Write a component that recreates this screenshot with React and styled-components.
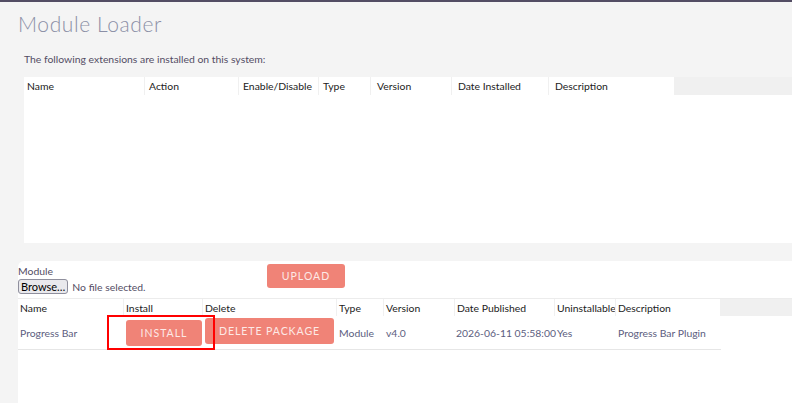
import React from "react";
import styled, { createGlobalStyle } from "styled-components";

const Global = createGlobalStyle`
  html, body { margin: 0; padding: 0; background: #f4f4f4; }
  body { font-family: Lato, "Open Sans", sans-serif; font-size: 10.4px; color: #534d64; }
  * { box-sizing: border-box; }
`;

const TopBar = styled.div`
  height: 2px;
  background: #534d64;
`;

const Page = styled.div`
  padding: 0 0 0 18px;
  overflow: hidden;
  height: 401px;
`;

const Title = styled.h1`
  margin: 9px 0 0 0;
  font-family: Lato, sans-serif;
  font-weight: 300;
  font-size: 21px;
  line-height: 26px;
  letter-spacing: 0.6px;
  color: #8b8fa6;
`;

const Intro = styled.p`
  margin: 15px 0 0 6px;
  font-size: 10.4px;
  line-height: 14px;
  color: #534d64;
`;

const Installed = styled.div`
  margin: 11px 0 0 6px;
  background: #fff;
  height: 166px;
`;

const HeadRow = styled.div`
  display: flex;
  height: 18px;
  background: #f0f0f0;
  border-top: ${(p) => (p.$top ? "1px solid #ececec" : "none")};
`;

const HeadCell = styled.div`
  width: ${(p) => p.$w}px;
  flex: none;
  background: #fff;
  padding-left: ${(p) => p.$pad ?? 3}px;
  border-left: ${(p) => (p.$first ? "none" : "1px solid #f0f0f0")};
  font-size: 10.4px;
  line-height: 18px;
  color: #222;
  white-space: nowrap;
  overflow: hidden;
`;

const Panel = styled.div`
  margin-top: 18px;
  background: #fff;
  border-top-left-radius: 6px;
  height: 150px;
`;

const UploadBar = styled.div`
  display: flex;
  align-items: flex-start;
  height: 37px;
`;

const FileField = styled.div`
  display: flex;
  flex-direction: column;
  padding-top: 4px;
  width: 249px;
`;

const Label = styled.label`
  font-size: 10.4px;
  line-height: 12px;
  color: #534d64;
`;

const FileRow = styled.div`
  display: flex;
  align-items: center;
  gap: 4px;
  margin-top: 2px;
`;

const BrowseButton = styled.span`
  display: inline-block;
  height: 15px;
  padding: 0 2px;
  background: #e9e9ed;
  border: 1px solid #8f8f9d;
  border-radius: 3px;
  font-size: 11px;
  line-height: 13px;
  color: #000;
`;

const FileName = styled.span`
  font-size: 10.4px;
  color: #534d64;
`;

const ActionButton = styled.button`
  display: inline-flex;
  align-items: center;
  justify-content: center;
  width: ${(p) => p.$w}px;
  height: ${(p) => p.$h}px;
  margin-top: ${(p) => p.$mt || 0}px;
  padding: 0;
  border: none;
  border-radius: 3px;
  background: #f08377;
  color: #fde9e6;
  font-family: Lato, sans-serif;
  font-size: ${(p) => p.$fs || 10.5}px;
  letter-spacing: ${(p) => p.$ls || 0.9}px;
  text-transform: uppercase;
`;

const BodyRow = styled.div`
  position: relative;
  display: flex;
  height: 34px;
  width: 703px;
  border-bottom: 1px solid #e6e6e6;
`;

const Cell = styled.div`
  width: ${(p) => p.$w}px;
  flex: none;
  display: flex;
  align-items: ${(p) => (p.$top ? "flex-start" : "center")};
  padding-left: ${(p) => p.$pad ?? 2}px;
  padding-top: ${(p) => p.$pt || 0}px;
  font-size: 10.4px;
  color: #5b5d7e;
  white-space: nowrap;
`;

const Highlight = styled.div`
  position: absolute;
  left: 89px;
  top: -1px;
  width: 108px;
  height: 35px;
  border: 2px solid #f00;
  pointer-events: none;
`;

const installedCols = [
  ["Name", 120, 3],
  ["Action", 94, 4],
  ["Enable/Disable", 80, 4],
  ["Type", 52, 4],
  ["Version", 81, 6],
  ["Date Installed", 97, 6],
  ["Description", 126, 6],
];

const pkgCols = [
  ["Name", 105],
  ["Install", 79],
  ["Delete", 134],
  ["Type", 47],
  ["Version", 71],
  ["Date Published", 100],
  ["Uninstallable", 61],
  ["Description", 105],
];

export default function App() {
  return (
    <>
      <Global />
      <TopBar />
      <Page>
        <Title>Module Loader</Title>
        <Intro>The following extensions are installed on this system:</Intro>
        <Installed>
          <HeadRow>
            {installedCols.map(([t, w, pad], i) => (
              <HeadCell key={t} $w={w} $pad={pad} $first={i === 0}>
                {t}
              </HeadCell>
            ))}
          </HeadRow>
        </Installed>
        <Panel>
          <UploadBar>
            <FileField>
              <Label>Module</Label>
              <FileRow>
                <BrowseButton>Browse…</BrowseButton>
                <FileName>No file selected.</FileName>
              </FileRow>
            </FileField>
            <ActionButton $w={78} $h={24} $mt={3} $ls={1}>
              Upload
            </ActionButton>
          </UploadBar>
          <HeadRow $top>
            {pkgCols.map(([t, w], i) => (
              <HeadCell key={t} $w={w} $first={i === 0} $pad={2}>
                {t}
              </HeadCell>
            ))}
          </HeadRow>
          <BodyRow>
            <Cell $w={105}>Progress Bar</Cell>
            <Cell $w={79} $pad={3} $top $pt={4}>
              <ActionButton $w={77} $h={26} $ls={1}>
                Install
              </ActionButton>
            </Cell>
            <Cell $w={134} $pad={3} $top $pt={2}>
              <ActionButton $w={129} $h={26} $fs={10.6} $ls={0.9}>
                Delete Package
              </ActionButton>
            </Cell>
            <Cell $w={47} $pad={3}>Module</Cell>
            <Cell $w={71} $pad={3}>v4.0</Cell>
            <Cell $w={100}>2026-06-11 05:58:00</Cell>
            <Cell $w={61} $pad={3}>Yes</Cell>
            <Cell $w={105} $pad={3}>Progress Bar Plugin</Cell>
            <Highlight />
          </BodyRow>
        </Panel>
      </Page>
    </>
  );
}
